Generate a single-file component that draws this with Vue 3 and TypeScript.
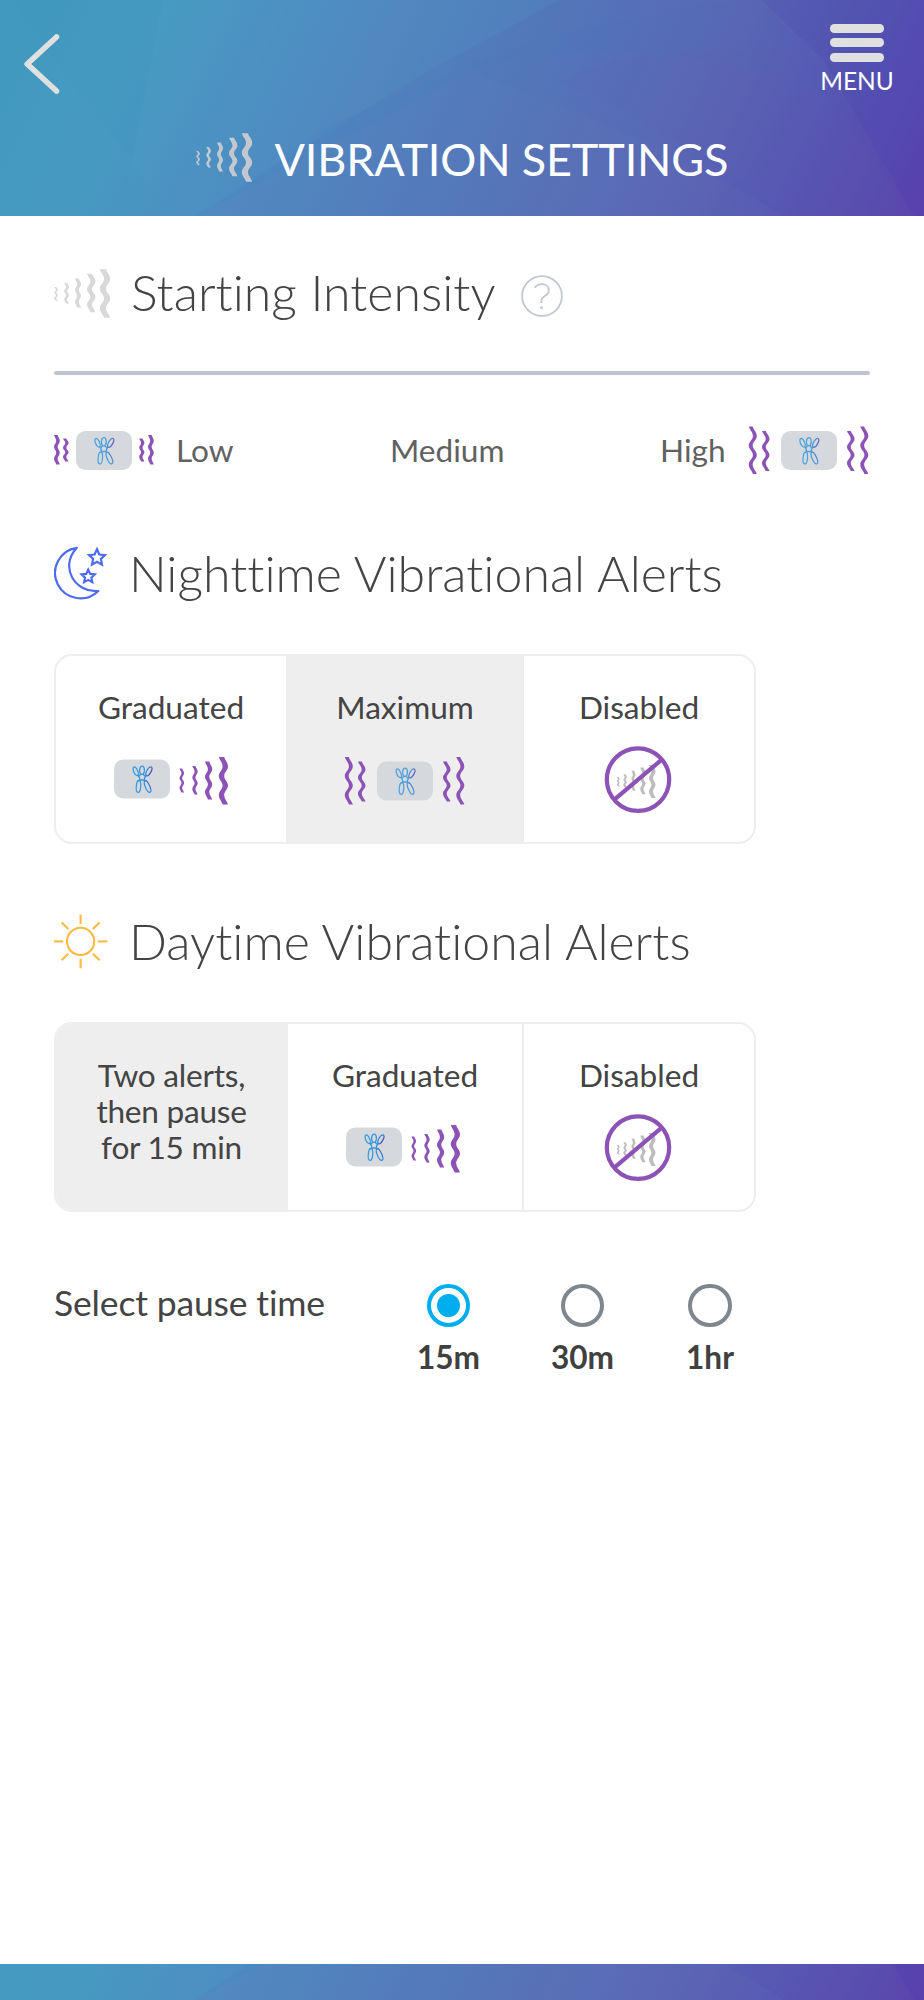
<script setup lang="ts">
import { ref } from 'vue'

// x, y, width, height, stroke band
type Wave = [number, number, number, number, number]
interface Glyph {
  w: number
  h: number
  waves: Wave[]
  box?: [number, number]
  banned?: boolean
}

function wavePath([x, y, w, h, b]: Wave): string {
  const a = w - b
  const s = h / 5
  const k = s * 0.42
  let d = `M${x} ${y}`
  for (let i = 1; i <= 5; i++) {
    const px = x + (i % 2 ? 0 : a)
    const nx = x + (i % 2 ? a : 0)
    const c1 = i === 1 ? px + a * 0.3 : px
    const c2 = i === 5 ? nx - a * 0.3 : nx
    d += `C${c1} ${y + (i - 1) * s + k} ${c2} ${y + i * s - k} ${nx} ${y + i * s}`
  }
  d += `h${b}`
  for (let i = 5; i >= 1; i--) {
    const px = x + b + (i % 2 ? 0 : a)
    const nx = x + b + (i % 2 ? a : 0)
    const c1 = i === 5 ? nx - a * 0.3 : nx
    const c2 = i === 1 ? px + a * 0.3 : px
    d += `C${c1} ${y + i * s - k} ${c2} ${y + (i - 1) * s + k} ${px} ${y + (i - 1) * s}`
  }
  return d + 'Z'
}

const ramp: Wave[] = [
  [0.2, 18, 3.8, 14, 2],
  [10.2, 14, 4.8, 20.5, 2.8],
  [21, 9.5, 6, 29, 3.8],
  [33, 4.8, 8.4, 38.5, 5],
  [45.8, 0.3, 10.4, 48.5, 6.2],
]
const low: Glyph = {
  w: 100, h: 48, box: [22, 5],
  waves: [[0, 9, 5.8, 29.5, 3.6], [9, 12.5, 5.6, 23, 3.3], [85.2, 12.5, 5.2, 23, 3.3], [94, 9, 5.8, 29.5, 3.6]],
}
const high: Glyph = {
  w: 121, h: 48, box: [33, 5],
  waves: [[0.8, 0.6, 8, 47.5, 3.9], [14, 5, 7.5, 40, 3.8], [99, 5, 7.5, 40, 3.8], [112.3, 0.6, 8, 47.5, 3.9]],
}
const graduated: Glyph = {
  w: 116, h: 68, box: [0, 13.5],
  waves: [[65.5, 22.5, 4.6, 24, 2.6], [78.3, 20, 5.4, 28.6, 3.1], [91, 15.6, 7.2, 38, 4.3], [104.8, 11, 9.2, 47.4, 5.4]],
}
const maximum: Glyph = {
  w: 121, h: 68, box: [33, 15.5],
  waves: [[0.8, 11, 8, 47.4, 3.9], [14, 15.6, 7.5, 40, 3.8], [99, 15.6, 7.5, 40, 3.8], [112.3, 11, 8, 47.4, 3.9]],
}
const disabled: Glyph = {
  w: 68, h: 68, banned: true,
  waves: [[12.8, 31, 2.8, 9.4, 1.7], [19.3, 28.3, 3.6, 13.2, 2.2], [27.5, 24.8, 4, 20, 2.6], [36.2, 21.6, 5.4, 26.6, 3.3], [45, 19, 6.5, 33, 4]],
}

interface Option { label: string; glyph?: Glyph; kind: string }
interface Section { id: string; title: string; options: Option[] }
const sections: Section[] = [
  {
    id: 'night', title: 'Nighttime Vibrational Alerts',
    options: [
      { label: 'Graduated', glyph: graduated, kind: 'graduated' },
      { label: 'Maximum', glyph: maximum, kind: 'maximum' },
      { label: 'Disabled', glyph: disabled, kind: 'disabled' },
    ],
  },
  {
    id: 'day', title: 'Daytime Vibrational Alerts',
    options: [
      { label: 'Two alerts,\nthen pause\nfor 15 min', kind: 'twice' },
      { label: 'Graduated', glyph: graduated, kind: 'graduated' },
      { label: 'Disabled', glyph: disabled, kind: 'disabled' },
    ],
  },
]
const selected = ref<Record<string, number>>({ night: 1, day: 0 })
const pauses = ['15m', '30m', '1hr']
const pause = ref('15m')
const rays = [0, 45, 90, 135, 180, 225, 270, 315]
</script>

<template>
  <svg class="defs" width="0" height="0">
    <defs>
      <linearGradient id="bg" gradientUnits="userSpaceOnUse" x1="0" y1="0" x2="826" y2="413">
        <stop offset="0" stop-color="#4099bf" />
        <stop offset=".16" stop-color="#469ac2" />
        <stop offset=".34" stop-color="#4f88c0" />
        <stop offset=".54" stop-color="#5277b9" />
        <stop offset=".72" stop-color="#5967b5" />
        <stop offset=".88" stop-color="#5653b2" />
        <stop offset="1" stop-color="#5c42ac" />
      </linearGradient>
      <linearGradient id="fig" gradientUnits="userSpaceOnUse" x1="0" y1="14" x2="22" y2="12">
        <stop offset="0" stop-color="#3aa0e0" />
        <stop offset=".7" stop-color="#3390dc" />
        <stop offset=".95" stop-color="#5a49b4" />
      </linearGradient>
      <g id="person" fill="none" stroke="url(#fig)" stroke-width="1.3">
        <ellipse cx="4" cy="5.8" rx="2" ry="4.6" transform="rotate(-24 4 5.8)" />
        <ellipse cx="10.3" cy="4.7" rx="2.4" ry="4.1" />
        <ellipse cx="17.2" cy="5.8" rx="2.1" ry="4.9" transform="rotate(29 17.2 5.8)" />
        <path d="M6 9.6Q8.6 12 7.8 15.4M14.6 9.8Q12.2 12 12.9 15.2M7.6 10.5L9.3 8.4M13 10.5L11.2 8.4M5.6 15.8Q10.4 13.2 15 15.8" />
        <ellipse cx="6.8" cy="21" rx="2.2" ry="6" transform="rotate(5 6.8 21)" />
        <ellipse cx="15.8" cy="21" rx="2.2" ry="6.3" transform="rotate(-25 15.8 21)" />
      </g>
      <g id="facets">
        <rect width="924" height="217" fill="url(#bg)" />
        <path d="M12 0H163L120 217H175L80 95Z" fill="#3d8fbb" opacity=".1" />
        <path d="M163 0H560L430 70L300 150L195 217H120Z" fill="#50a4c8" opacity=".16" />
        <path d="M195 217L330 125L480 60Q610 12 762 0L835 100Q640 20 470 70Z" fill="#2e73c0" opacity=".04" />
        <path d="M280 38Q420 48 520 90Q680 150 785 217H195L470 72Q400 45 280 38Z" fill="#7088b8" opacity=".09" />
        <path d="M762 0L915 217H785Q690 135 560 82Q620 45 800 52Z" fill="#5f62b4" opacity=".1" />
        <path d="M762 0H924V217H915L825 62Z" fill="#4034aa" opacity=".13" />
      </g>
    </defs>
  </svg>
  <div class="screen">
    <header class="header">
      <svg class="facets" viewBox="0 0 924 216"><use href="#facets" /></svg>
      <div class="topbar">
        <svg class="back" width="40" height="64" viewBox="0 0 40 64">
          <path d="M34.5 5L5.2 32L34.5 59" fill="none" stroke="#e0e0e0" stroke-width="5.6" stroke-linecap="round" stroke-linejoin="round" />
        </svg>
        <div class="menu">
          <i></i><i></i><i></i>
          <span>MENU</span>
        </div>
      </div>
      <div class="title">
        <svg width="57" height="49" viewBox="0 0 57 49" fill="#c3c7d0"><path v-for="(v, i) in ramp" :key="i" :d="wavePath(v)" /></svg>
        <h1>VIBRATION SETTINGS</h1>
      </div>
    </header>

    <main>
      <div class="heading">
        <svg width="57" height="49" viewBox="0 0 57 49" fill="#d8d8d8"><path v-for="(v, i) in ramp" :key="i" :d="wavePath(v)" /></svg>
        <h2 class="start">Starting Intensity</h2>
        <svg class="help" width="42" height="42" viewBox="0 0 42 42" fill="none" stroke="#c0c6d2" stroke-width="1.8">
          <circle cx="21" cy="21" r="19.9" />
          <path d="M13.8 12.7Q16.4 9.2 20.8 9.2C25 9.2 27.8 11.7 27.8 15.4C27.8 21.2 20.5 20.7 20.5 25.3V28" />
          <circle cx="20.5" cy="32.4" r=".6" />
        </svg>
      </div>
      <div class="slider"></div>
      <div class="levels">
        <svg v-for="(g, n) in [low, high]" :key="n" :class="n ? 'last' : 'first'" :width="g.w" height="48" :viewBox="`0 0 ${g.w} 48`">
          <rect :x="g.box![0]" :y="g.box![1]" width="56" height="39" rx="9.5" fill="#d5d9de" />
          <use href="#person" :x="g.box![0] + 17.5" :y="g.box![1] + 6" opacity=".85" />
          <path v-for="(v, i) in g.waves" :key="i" :d="wavePath(v)" fill="#8c52b6" />
        </svg>
        <span class="lv low">Low</span><span class="lv med">Medium</span><span class="lv high">High</span>
      </div>

      <section v-for="s in sections" :key="s.id">
        <div class="heading">
          <svg v-if="s.id === 'night'" class="sky" width="57" height="56" viewBox="0 0 57 56" fill="none" stroke="#4d6cf5" stroke-width="2.2">
            <path d="M22.8 2.8A25.4 25.4 0 1 0 44.3 46C22 48 4.5 23 22.8 2.8Z" stroke-linejoin="round" />
            <path d="M43 4.2L45.4 9.5L51 10.1L46.9 14L48 19.6L43 16.8L38 19.6L39.1 14L35 10.1L40.6 9.5Z" />
            <path d="M34.2 24.6L36.2 28.9L40.8 29.4L37.4 32.6L38.3 37.2L34.2 34.9L30.1 37.2L31 32.6L27.6 29.4L32.2 28.9Z" />
          </svg>
          <svg v-else class="sky" width="57" height="56" viewBox="0 0 57 56" fill="none" stroke="#fcb942" stroke-width="2.1">
            <circle cx="26.6" cy="28.4" r="13.6" />
            <path v-for="r in rays" :key="r" d="M44 28.4h9.4" :transform="`rotate(${r} 26.6 28.4)`" />
          </svg>
          <h2 :class="s.id">{{ s.title }}</h2>
        </div>
        <div class="card" :class="s.id">
          <button v-for="(o, i) in s.options" :key="i" :class="[{ on: selected[s.id] === i }, o.kind]" @click="selected[s.id] = i">
            <span>{{ o.label }}</span>
            <svg v-if="o.glyph" :width="o.glyph.w" height="68" :viewBox="`0 0 ${o.glyph.w} 68`">
              <template v-if="o.glyph.box">
                <rect :x="o.glyph.box[0]" :y="o.glyph.box[1]" width="56" height="39" rx="9.5" fill="#d5d9de" />
                <use href="#person" :x="o.glyph.box[0] + 17.7" :y="o.glyph.box[1] + 6" :opacity="o.kind === 'maximum' ? 0.85 : 1" />
              </template>
              <path v-for="(v, n) in o.glyph.waves" :key="n" :d="wavePath(v)" :fill="o.glyph.banned ? '#bcbcbc' : '#8c52b6'" />
              <g v-if="o.glyph.banned" fill="none" stroke="#8c52b6" stroke-width="4.2">
                <circle cx="34" cy="33.6" r="31.2" />
                <path d="M10 53.8L58 13.4" />
              </g>
            </svg>
          </button>
        </div>
      </section>

      <div class="pause">
        <span class="ask">Select pause time</span>
        <label v-for="p in pauses" :key="p" :class="{ on: pause === p }" @click="pause = p">
          <i></i><b>{{ p }}</b>
        </label>
      </div>
    </main>

    <footer><svg class="facets" viewBox="0 0 924 217" preserveAspectRatio="xMidYMax slice"><use href="#facets" /></svg></footer>
  </div>
</template>

<style>
body { margin: 0; background: #fff; }
</style>

<style scoped>
.defs { position: absolute; }
.screen { width: 924px; height: 2000px; display: flex; flex-direction: column; font-family: Lato, "Open Sans", sans-serif; font-variant-ligatures: none; color: #444; overflow: hidden; }
.header { position: relative; height: 216px; flex: none; overflow: hidden; }
.facets { position: absolute; inset: 0; width: 100%; height: 100%; }
.topbar { position: relative; display: flex; justify-content: space-between; height: 132px; padding: 0 24px 0 22px; box-sizing: border-box; }
.back { margin-top: 32px; }
.menu { width: 86px; display: flex; flex-direction: column; align-items: center; padding-top: 24px; }
.menu i { width: 54px; height: 8.6px; border-radius: 4.3px; background: #e0e0e0; margin-bottom: 5.9px; flex: none; }
.menu span { color: #fff; font-size: 24.5px; line-height: 28px; }
.title { position: relative; display: flex; padding-left: 196px; align-items: center; height: 50px; }
h1 { margin: 4px 0 0 21.5px; font-size: 45px; letter-spacing: -0.15px; font-weight: 400; line-height: 50px; color: #fff; white-space: nowrap; }
main { position: relative; flex: 1; padding: 47px 54px 0; }
.heading { display: flex; align-items: center; height: 60px; }
.heading svg { flex: none; }
.sky { margin-top: 1px; }
h2 { margin: 0 0 0 18px; font-size: 50px; font-weight: 300; line-height: 60px; white-space: nowrap; }
h2.start { width: 368px; margin-left: 20px; margin-top: -3px; }
.help { margin: 6px 0 0 22px; }
.slider { height: 4.6px; border-radius: 2.3px; background: #bec5d0; margin-top: 47.8px; }
.levels { display: grid; grid-template-columns: 100px 212px 260px auto 121px; align-items: center; height: 60px; margin-top: 45px; margin-bottom: 62.6px; margin-right: 1px; font-size: 31.6px; line-height: 60px; color: #616161; }
.levels svg, .levels .lv { grid-row: 1; }
.first { grid-column: 1; }
.last { grid-column: 5; }
.low { grid-column: 2; padding-left: 22px; }
.med { grid-column: 3; padding-left: 24px; }
.high { grid-column: 4; padding-left: 34px; }
section { height: 368px; }
.card { display: grid; grid-template-columns: 230px 238px 230px; width: 698px; height: 185.6px; margin-top: 51px; border: 2px solid #eee; border-radius: 18px; overflow: hidden; }
.card.day { grid-template-columns: 232px 236px 230px; }
button { border: 0; background: none; padding: 33px 0 0; margin: 0; font: inherit; font-size: 31.6px; line-height: 36px; color: #444; display: flex; flex-direction: column; align-items: center; white-space: pre-line; }
button.on { background: #eee; }
button.twice { letter-spacing: -0.25px; padding-right: 1px; }
.day .graduated { border-right: 2px solid #eee; }
button svg { margin-top: 21px; flex: none; }
.night .graduated svg { margin-left: 2px; }
.maximum svg { margin-right: 1px; }
.disabled svg, .day .graduated svg { margin-right: 2px; }
.pause { display: flex; height: 110px; margin-top: -2px; }
.ask { width: 327.5px; font-size: 35.5px; letter-spacing: -0.15px; line-height: 52px; white-space: nowrap; }
label { display: flex; flex-direction: column; align-items: center; width: 134px; padding-top: 7px; box-sizing: border-box; }
label:last-child { width: 121px; }
label i { width: 35.4px; height: 35.4px; border: 4.7px solid #80868d; border-radius: 50%; display: grid; place-items: center; }
label.on i { border-color: #00aeef; }
label.on i::after { content: ""; width: 23.6px; height: 23.6px; border-radius: 50%; background: #00aeef; }
label b { font-size: 31.6px; line-height: 36px; margin-top: 11.5px; color: #404040; }
footer { position: relative; height: 36px; flex: none; }
</style>
